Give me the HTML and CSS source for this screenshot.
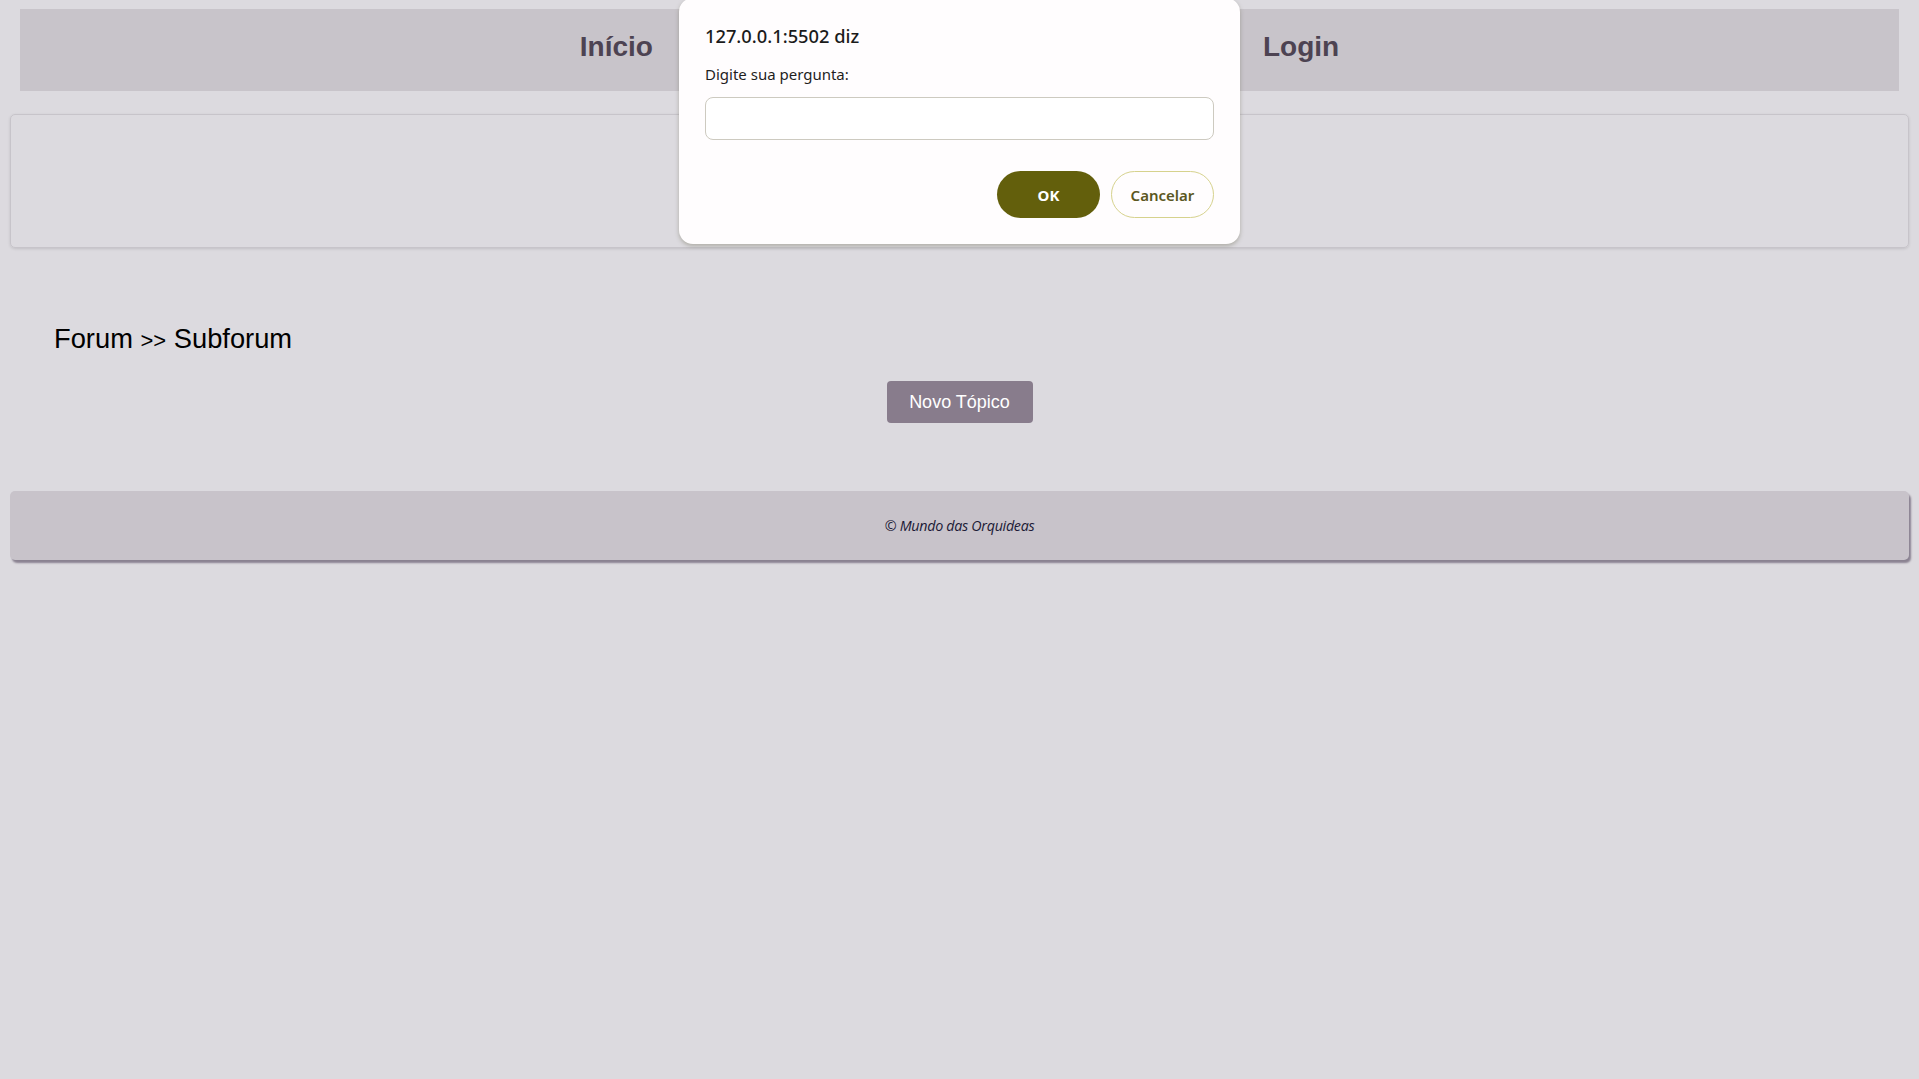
FILE: index.html
```html
<!DOCTYPE html>
<html lang="pt-BR">
<head>
<meta charset="utf-8">
<title>Mundo das Orquideas - Subforum</title>
<link rel="stylesheet" href="styles.css">
</head>
<body>
<div class="page">
  <header class="nav">
    <a class="nav-link" href="#">Início</a>
    <a class="nav-link" href="#">Login</a>
  </header>
  <section class="card"></section>
  <h2 class="crumbs"><a href="#">Forum</a> <span class="sep">&gt;&gt;</span> <a href="#">Subforum</a></h2>
  <div class="actions"><button class="new-topic">Novo Tópico</button></div>
  <footer class="footer"><em>© Mundo das Orquideas</em></footer>
</div>

<div class="dialog" role="dialog">
  <div class="dlg-title">127.0.0.1:5502 diz</div>
  <div class="dlg-msg">Digite sua pergunta:</div>
  <input class="dlg-input" type="text">
  <div class="dlg-buttons">
    <button class="btn-ok">OK</button>
    <button class="btn-cancel">Cancelar</button>
  </div>
</div>
</body>
</html>
```

FILE: styles.css
```css
* { box-sizing: border-box; }
html, body { margin: 0; padding: 0; }
body {
  background: #dcdadf;
  font-family: "Liberation Sans", Arial, sans-serif;
  min-height: 1079px;
}
.page {
  padding: 9px 10px 0 10px;
}
.nav {
  margin: 0 10px;
  height: 82px;
  background: #c8c4ca;
  display: flex;
  justify-content: center;
  align-items: center;
  gap: 610px;
  padding-bottom: 6px;
}
.nav-link {
  font-size: 28px;
  font-weight: bold;
  color: #4d4352;
  text-decoration: none;
}
.card {
  margin-top: 23px;
  height: 134px;
  border: 1px solid #c7c4ca;
  border-radius: 5px;
  box-shadow: 0 1px 3px rgba(0,0,0,0.12);
}
.crumbs {
  margin: 76px 0 0 44px;
  font-size: 27.3px;
  font-weight: normal;
  line-height: 30px;
  color: #000;
}
.crumbs a { color: #000; text-decoration: none; }
.crumbs .sep { font-size: 22px; }
.actions {
  margin-top: 25px;
  display: flex;
  justify-content: center;
}
.new-topic {
  width: 146px;
  height: 42px;
  border: none;
  border-radius: 4px;
  background: #887c8c;
  color: #fff;
  font-family: "Liberation Sans", Arial, sans-serif;
  font-size: 18px;
}
.footer {
  margin-top: 68px;
  height: 69px;
  background: #c8c3ca;
  border-radius: 5px;
  box-shadow: 2px 3px 2px #8a8291;
  display: flex;
  justify-content: center;
  align-items: center;
  font-family: "Open Sans", "Noto Sans", sans-serif;
  font-size: 14.3px;
  color: #1c1a36;
  letter-spacing: -0.3px;
}
.dialog {
  position: absolute;
  left: 679px;
  top: -2px;
  width: 561px;
  padding: 26px 26px 26px 26px;
  background: #fffdfe;
  border-radius: 14px;
  box-shadow: 0 2px 4px rgba(90,88,60,0.35);
  font-family: "Noto Sans", "Open Sans", sans-serif;
}
.dlg-title {
  font-size: 18.3px;
  line-height: 24px;
  color: #1b1b1b;
  font-weight: 500;
}
.dlg-msg {
  margin-top: 16px;
  font-size: 15px;
  line-height: 20px;
  color: #1f1f1f;
}
.dlg-input {
  display: block;
  margin-top: 13px;
  width: 509px;
  height: 43px;
  border: 1px solid #cdcac0;
  border-radius: 8px;
  background: #fff;
}
.dlg-buttons {
  margin-top: 31px;
  display: flex;
  justify-content: flex-end;
  gap: 11px;
}
.btn-ok, .btn-cancel {
  height: 47px;
  border-radius: 24px;
  font-family: "Noto Sans", "Open Sans", sans-serif;
  font-size: 15px;
  font-weight: bold;
}
.btn-ok {
  width: 103px;
  background: #635f0c;
  color: #fff;
  border: none;
}
.btn-cancel {
  width: 103px;
  background: #fffdfe;
  color: #5b5722;
  border: 1px solid #d6d28d;
  font-weight: 600;
}
```
